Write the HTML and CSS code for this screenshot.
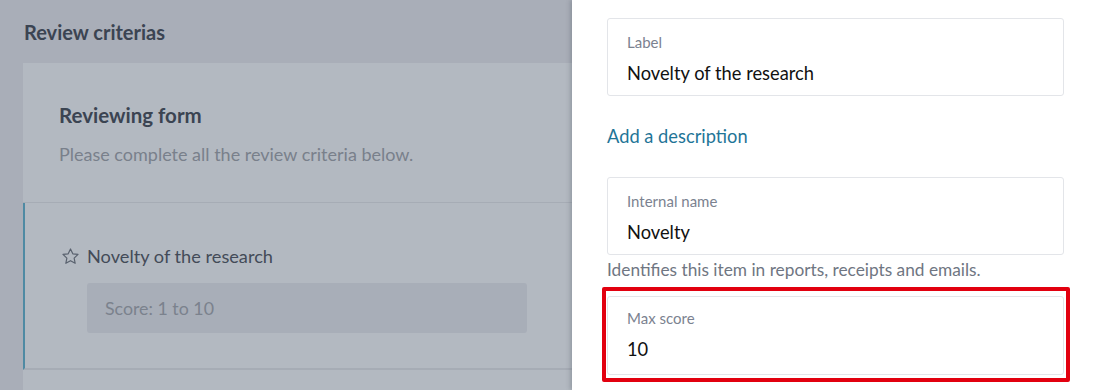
FILE: index.html
```html
<!DOCTYPE html>
<html lang="en">
<head>
  <meta charset="UTF-8" />
  <meta name="viewport" content="width=device-width, initial-scale=1" />
  <title>Review criterias</title>
  <link rel="stylesheet" href="styles.css">
</head>
<body>
  <div class="layout">
    <div class="page">
      <h2 class="page-title">Review criterias</h2>
      <div class="card">
        <div class="card-intro">
          <h3>Reviewing form</h3>
          <p>Please complete all the review criteria below.</p>
        </div>
        <div class="criterion">
          <div class="criterion-title">
            <svg class="star" width="19" height="19" viewBox="0 0 24 24" fill="none" stroke="currentColor" stroke-width="1.5" stroke-linejoin="round">
              <path d="M12 2.5l2.9 6.1 6.6.8-4.9 4.6 1.3 6.6L12 17.3l-5.9 3.3 1.3-6.6-4.9-4.6 6.6-.8z"/>
            </svg>
            <span>Novelty of the research</span>
          </div>
          <div class="score-box">Score: 1 to 10</div>
        </div>
      </div>
    </div>

    <div class="drawer">
      <div class="field">
        <label>Label</label>
        <div class="value">Novelty of the research</div>
      </div>

      <a class="add-link" href="#">Add a description</a>

      <div class="field">
        <label>Internal name</label>
        <div class="value">Novelty</div>
      </div>
      <p class="hint">Identifies this item in reports, receipts and emails.</p>

      <div class="highlight">
        <div class="field">
          <label>Max score</label>
          <div class="value">10</div>
        </div>
      </div>
    </div>
  </div>
</body>
</html>
```

FILE: styles.css
```css
body {
  margin: 0;
  padding: 0;
  font-family: Lato, 'Open Sans', sans-serif;
  background-color: #a9aeb8;
  overflow: hidden;
}
.layout {
  display: flex;
  height: 390px;
}

/* dimmed page behind the drawer */
.page {
  width: 572px;
  flex-shrink: 0;
  padding-left: 23px;
  box-sizing: border-box;
  background-color: #a9aeb8;
}
.page-title {
  margin: 0;
  padding: 20px 0 0 1px;
  height: 63px;
  box-sizing: border-box;
  font-size: 20px;
  line-height: 24px;
  font-weight: 700;
  color: #3b4452;
}
.card {
  background-color: #b3b9c1;
  height: 327px;
}
.card-intro {
  padding: 39px 36px 0;
  height: 140px;
  box-sizing: border-box;
  border-bottom: 1px solid #a6acb5;
}
.card-intro h3 {
  margin: 0;
  font-size: 20.5px;
  line-height: 26px;
  font-weight: 700;
  color: #3b4452;
}
.card-intro p {
  margin: 15px 0 0;
  font-size: 18px;
  line-height: 22px;
  color: #79808b;
}
.criterion {
  border-left: 2px solid #4f8aa3;
  border-bottom: 2px solid #a6acb5;
  padding: 41px 45px 35px 36px;
}
.criterion-title {
  display: flex;
  align-items: center;
  gap: 7px;
  font-size: 18.2px;
  line-height: 24px;
  color: #434b58;
}
.star {
  color: #59616e;
  flex-shrink: 0;
}
.score-box {
  margin: 15px 0 0 26px;
  height: 50px;
  box-sizing: border-box;
  padding: 0 18px;
  display: flex;
  align-items: center;
  background-color: #a8aeb8;
  border-radius: 3px;
  font-size: 17.8px;
  color: #7b828d;
}

/* side drawer */
.drawer {
  flex: 1;
  background-color: #fff;
  padding: 18px 30px 0 35px;
  box-shadow: -2px 0 4px rgba(60, 66, 80, 0.25);
}
.field {
  border: 1px solid #e3e5e9;
  border-radius: 3px;
  padding: 14px 19px 10px;
}
.field label {
  display: block;
  font-size: 15px;
  line-height: 18px;
  color: #7b8290;
}
.field .value {
  margin-top: 10px;
  font-size: 18.3px;
  line-height: 24px;
  color: #111;
}
.add-link {
  display: block;
  margin: 28px 0 29px;
  font-size: 18.3px;
  line-height: 24px;
  color: #1f7597;
  text-decoration: none;
}
.hint {
  margin: 4px 0 0;
  font-size: 17.3px;
  line-height: 22px;
  color: #6f7682;
}
.highlight {
  margin: 6px -6px 0 -5px;
  border: 4px solid #e2000f;
  border-radius: 2px;
  padding: 5px 2px 3px 1px;
}
.highlight .field {
  padding: 12px 19px 13px;
}
```
